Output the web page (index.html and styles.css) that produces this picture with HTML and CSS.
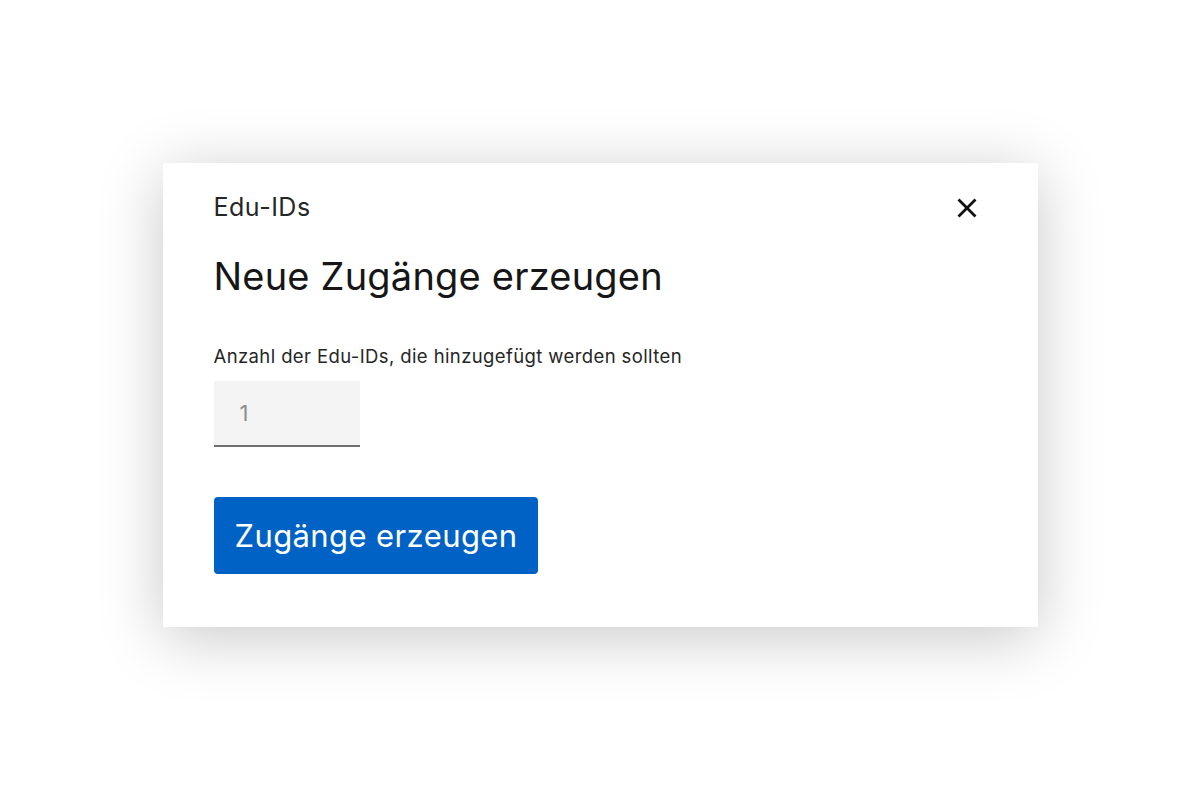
FILE: index.html
```html
<!DOCTYPE html>
<html lang="de">
<head>
  <meta charset="UTF-8">
  <title>Neue Zugänge erzeugen</title>
  <link rel="stylesheet" href="styles.css">
</head>
<body>
  <div class="modal">
    <div class="modal-header">
      <div class="eyebrow">Edu-IDs</div>
      <button class="close-button" aria-label="Schließen">
        <svg width="20" height="20" viewBox="0 0 20 20">
          <path d="M1.5 1.5 L18.5 18.5 M18.5 1.5 L1.5 18.5" stroke="#111111" stroke-width="2.8"/>
        </svg>
      </button>
    </div>
    <h2 class="modal-title">Neue Zugänge erzeugen</h2>

    <label class="field-label" for="count">Anzahl der Edu-IDs, die hinzugefügt werden sollten</label>
    <input id="count" class="number-input" type="text" placeholder="1" />

    <div>
      <button class="primary-button">Zugänge erzeugen</button>
    </div>
  </div>
</body>
</html>
```

FILE: styles.css
```css
* {
  margin: 0;
  padding: 0;
  box-sizing: border-box;
  font-family: 'Inter', 'Noto Sans', sans-serif;
}

html, body {
  width: 100%;
  height: 100%;
  background: #ffffff;
  color: #161616;
  overflow: hidden;
}

body {
  display: flex;
  justify-content: center;
  align-items: flex-start;
  padding-top: 163px;
}

.modal {
  width: 875px;
  height: 464px;
  background: #ffffff;
  box-shadow: 0 10px 60px rgba(0, 0, 0, 0.22);
  padding: 30px 51px 0 51px;
  display: flex;
  flex-direction: column;
}

.modal-header {
  display: flex;
  justify-content: space-between;
  align-items: center;
}

.eyebrow {
  font-size: 25px;
  line-height: 28px;
  letter-spacing: 0.5px;
  color: #262626;
}

.close-button {
  background: none;
  border: none;
  cursor: pointer;
  margin-right: 10px;
  margin-top: 2px;
  display: flex;
}

.modal-title {
  font-size: 38px;
  font-weight: 400;
  line-height: 44px;
  letter-spacing: 0.2px;
  margin-top: 33px;
  color: #161616;
}

.field-label {
  font-size: 18.5px;
  line-height: 22px;
  letter-spacing: 0.39px;
  margin-top: 47px;
  color: #262626;
}

.number-input {
  width: 146px;
  height: 66px;
  margin-top: 14px;
  background: #f4f4f4;
  border: none;
  border-bottom: 2px solid #6f6f6f;
  padding: 0 26px;
  font-size: 22px;
  color: #161616;
  outline: none;
}

.number-input::placeholder {
  color: #8d8d8d;
}

.primary-button {
  margin-top: 50px;
  background: #0062c4;
  color: #ffffff;
  border: none;
  border-radius: 4px;
  height: 77px;
  padding: 0 21px;
  font-size: 31px;
  letter-spacing: 0.4px;
  cursor: pointer;
}
```
